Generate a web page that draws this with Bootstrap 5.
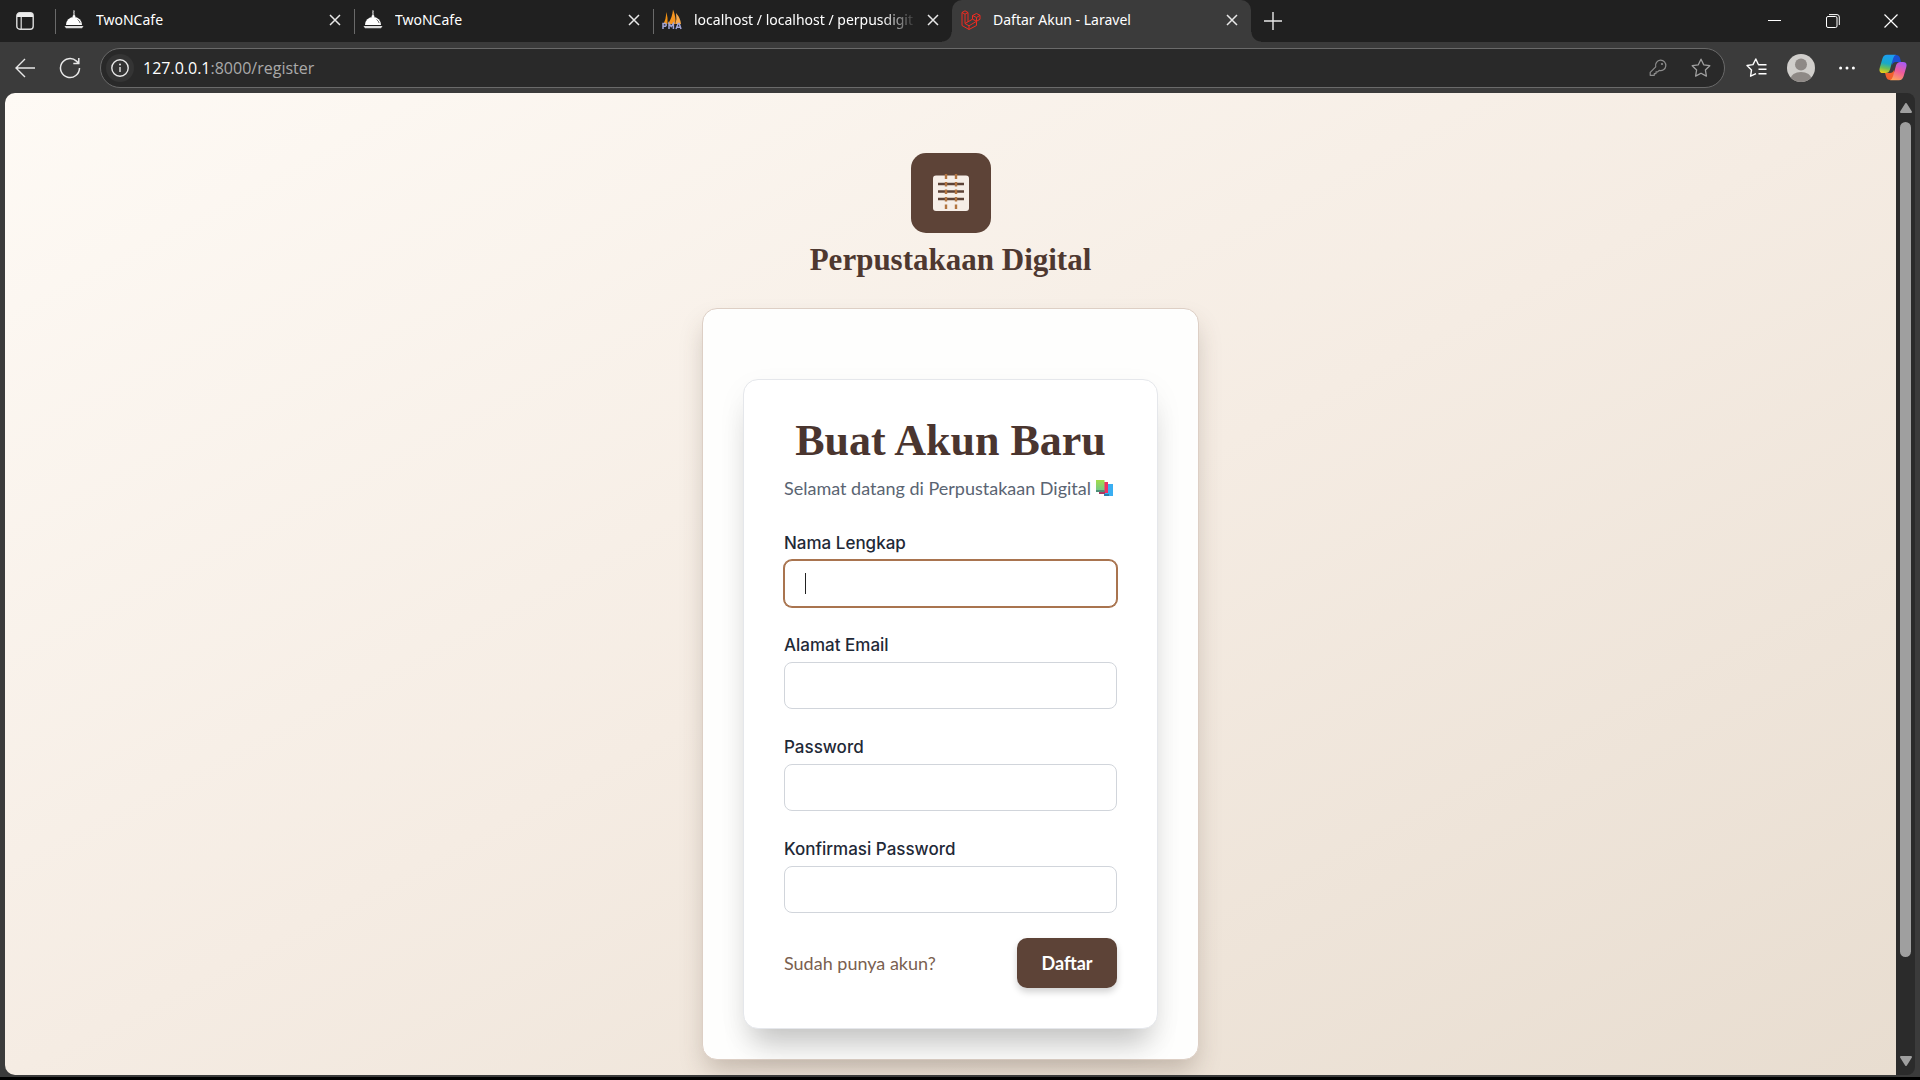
<!DOCTYPE html>
<html lang="id">
<head>
<meta charset="utf-8">
<meta name="viewport" content="width=device-width, initial-scale=1">
<title>Daftar Akun - Laravel</title>
<link href="https://cdn.jsdelivr.net/npm/bootstrap@5.3.0/dist/css/bootstrap.min.css" rel="stylesheet">
<style>
  body { height: 100vh; background: #3b3b3b; border-bottom: 3px solid #000; font-family: Lato, Inter, sans-serif; overflow: hidden; }
  svg { display: block; flex: none; }
  .chrome { font-family: "Noto Sans", "Open Sans", sans-serif; color: #fff; }
  .chrome button { background: none; border: 0; padding: 0; color: #e8e8e8; display: flex; align-items: center; justify-content: center; flex: none; }
  .strip { height: 42px; background: #202020; }
  .chrome .side-btn { width: 55px; height: 42px; padding-right: 5px; }
  .tab-item { flex: 0 1 299px; min-width: 0; height: 42px; padding: 0 13px 2px 9px; font-size: 14px; position: relative; }
  .tab-item.sep::before { content: ""; position: absolute; left: 0; top: 9px; width: 1px; height: 25px; background: #6a6a6a; }
  .tab-item a { flex: 1 1 0; min-width: 0; color: #fff; text-decoration: none; line-height: 20px; margin: 0 12px 0 12px; white-space: nowrap; overflow: hidden; }
  .tab-item a.cut { -webkit-mask-image: linear-gradient(90deg, #000 85%, transparent 101%); mask-image: linear-gradient(90deg, #000 85%, transparent 101%); }
  .tab-item.on { background: #3b3b3b; border-radius: 10px 10px 0 0; }
  .tab-item.on::before, .tab-item.on::after { content: ""; position: absolute; bottom: 0; width: 10px; height: 10px; }
  .tab-item.on::before { left: -10px; background: radial-gradient(circle at 0 0, #202020 9px, #3b3b3b 10px); }
  .tab-item.on::after { right: -10px; background: radial-gradient(circle at 100% 0, #202020 9px, #3b3b3b 10px); }
  .chrome .plus { width: 44px; height: 40px; }
  .chrome .win { width: 58px; height: 42px; }
  .tools { height: 51px; padding: 0 13px 0 15px; }
  .omni { height: 40px; margin: 0 21px 0 19px; border: 1px solid #6a6a6a; border-radius: 20px; background: #292929; padding: 0 13px 0 5px; }
  .chrome .info-dot { width: 28px; height: 28px; border-radius: 50%; background: #343434; }
  .url { font: 16px/24px "Open Sans", "Noto Sans", sans-serif; color: #a9a9a9; margin-left: 9px; white-space: nowrap; }
  .url span { color: #fff; }
  .viewport-box { min-height: 0; padding: 0 5px 2px; }
  .site { border-radius: 10px 0 0 10px; background: linear-gradient(to bottom right, #fefaf5 0%, #f5ece3 50%, #e8ddd0 100%); padding-top: 60px; overflow: hidden; }
  .scroller { width: 19px; background: #2b2b2b; border-radius: 0 8px 8px 0; padding: 10px 0 9px; }
  .thumb { width: 11px; background: #9f9f9f; border-radius: 6px; margin: 9px 0 99px; }
  .logo-box { width: 80px; height: 80px; border-radius: 15px; background: #5d4337; }
  .brand { font: 700 31px/40px "Liberation Serif", serif; color: #4e3830; margin: 7px 0 28px; }
  .outer { width: 497px; padding: 70px 40px 30px; border: 1px solid #ddcfc5; border-radius: 15px; background: #fefefd; box-shadow: 0 14px 26px -4px rgba(80,60,45,.28); }
  .inner { padding: 40px; border: 1px solid #e5e7eb; border-radius: 15px; background: #fff; box-shadow: 0 25px 30px -10px rgba(0,0,0,.2), 0 10px 30px rgba(0,0,0,.05); }
  .inner h1 { font: 700 44px/42px "Liberation Serif", serif; color: #4a352f; margin: 0 0 14px; white-space: nowrap; text-align: center; }
  .sub { font-size: 18px; line-height: 25px; color: #5a6472; white-space: nowrap; margin-bottom: 30px; }
  .field { margin-bottom: 26px; }
  .field:last-of-type { margin-bottom: 26px; }
  .field label { display: block; font: 500 17px/25px Inter, sans-serif; color: #1f2937; margin-bottom: 4px; }
  .field .form-control { height: 47px; padding: 8px 20px; border: 1px solid #d1d5db; border-radius: 8px; box-shadow: none; }
  .field .form-control:focus, .field .form-control.active { border-color: #a9744f; box-shadow: 0 0 0 1px #a9744f; caret-color: transparent; background: #fff linear-gradient(#222, #222) 20px 50% / 1px 21px no-repeat; }
  .field.last-field { margin-bottom: 25px; }
  .login { color: #7a5f50; font-size: 18px; text-decoration: none; }
  .submit { width: 100px; height: 50px; border: 0; border-radius: 10px; background: #5d4337; color: #fff; font-size: 18px; font-weight: 700; box-shadow: 0 4px 7px rgba(0,0,0,.18); }
</style>
<script src="https://cdn.jsdelivr.net/npm/bootstrap@5.3.0/dist/js/bootstrap.bundle.min.js"></script>
</head>
<body class="d-flex flex-column">

<svg width="0" height="0" class="position-absolute" aria-hidden="true">
  <symbol id="x" viewBox="0 0 12 12"><path d="M1 1l10 10M11 1L1 11" stroke="currentColor" stroke-width="1.5" fill="none"/></symbol>
  <symbol id="dish" viewBox="0 0 20 22">
    <path d="M9.5 1.5c1.8.6-.8 1.6.8 2.8M10 4v2" stroke="#ccc" stroke-width="1.3" fill="none"/>
    <circle cx="10" cy="7.500" r="1.4" fill="#fff"/>
    <path d="M2 16a8 8 0 0 1 16 0z" fill="#fff"/>
    <path d="M13.5 10.500q2.200 1.400 2.600 3.600" stroke="#555" stroke-width=".9" fill="none"/>
    <path d="M.5 17h19l-1.500 2.200H2z" fill="#ddd"/>
  </symbol>
  <symbol id="star" viewBox="0 0 20 20"><path d="M10 1.200l2.700 5.600 6.100.9-4.400 4.300 1 6.100-5.400-2.900-5.400 2.900 1-6.100L1.200 7.700l6.100-.9z" fill="none" stroke="currentColor" stroke-width="1.3" stroke-linejoin="round"/></symbol>
</svg>

<header class="chrome">
  <div class="strip d-flex align-items-center">
    <button class="side-btn" aria-label="Tab actions">
      <svg width="18" height="18" viewBox="0 0 18 18"><rect x=".8" y=".8" width="16.400" height="16.400" rx="3" fill="none" stroke="#ddd" stroke-width="1.4"/><path d="M1 5V3.500Q1 1 3.500 1h11Q17 1 17 3.500V5z" fill="#eee"/><path d="M5.200 5v12" stroke="#ddd" stroke-width="1.2"/></svg>
    </button>
    <div class="tab-item sep d-flex align-items-center">
      <svg width="20" height="22"><use href="#dish"/></svg><a href="#">TwoNCafe</a>
      <button aria-label="Close tab"><svg width="12" height="12"><use href="#x"/></svg></button>
    </div>
    <div class="tab-item sep d-flex align-items-center">
      <svg width="20" height="22"><use href="#dish"/></svg><a href="#">TwoNCafe</a>
      <button aria-label="Close tab"><svg width="12" height="12"><use href="#x"/></svg></button>
    </div>
    <div class="tab-item sep d-flex align-items-center">
      <svg width="20" height="22" viewBox="0 0 20 22"><path d="M1.500 15Q4 10 4.500 3q1.500 6 1 12z" fill="#f29111"/><path d="M6 15Q10.500 8 11 .5q3 7 2.500 14.500z" fill="#f7941d"/><path d="M13.500 15q1.500-5 .5-11 4.500 5 5 11z" fill="#f9a94b"/><path d="M1 20v-5.500h2.500q1.500 1.600 0 2.700H1M7 20v-5.500l2.200 3 2.200-3V20M14 20l2.200-5.500h1L19 20M15 18.200h3" fill="none" stroke="#a3a6d6" stroke-width="1.500"/></svg>
      <a class="cut" href="#">localhost / localhost / perpusdigit</a>
      <button aria-label="Close tab"><svg width="12" height="12"><use href="#x"/></svg></button>
    </div>
    <div class="tab-item on d-flex align-items-center">
      <svg width="20" height="22" viewBox="0 0 20 22"><path d="M1 3.500L4 1.800l3 1.700v9.300l4.500-2.600V6.500L15.500 4.500 19 6.300v4l-3.500 2v4.200L8 20.500 1 16.500zM1 3.500l3 1.700 3-1.700M4 5.200v9.300l4 2.300 7.500-4.500-4-2.100M11.500 6.500l4 2 3.500-2.200M15.500 8.500v3.800M8 16.800v3.700M4 14.500l3-1.700" fill="none" stroke="#ef2b20" stroke-width="1" stroke-linejoin="round"/></svg>
      <a href="#">Daftar Akun - Laravel</a>
      <button aria-label="Close tab"><svg width="12" height="12"><use href="#x"/></svg></button>
    </div>
    <button class="plus" aria-label="New tab"><svg width="18" height="18" viewBox="0 0 18 18"><path d="M9 0v18M0 9h18" stroke="currentColor" stroke-width="1.400"/></svg></button>
    <div class="d-flex ms-auto">
      <button class="win" aria-label="Minimize"><svg width="14" height="14" viewBox="0 0 14 14"><path d="M0 6.500h13" stroke="#fff"/></svg></button>
      <button class="win" aria-label="Restore"><svg width="14" height="14" viewBox="0 0 14 14"><rect x=".5" y="2.500" width="10.500" height="11" rx="1.500" fill="none" stroke="#fff"/><path d="M3 .6h8q2.300 0 2.300 2.400v8" fill="none" stroke="#fff"/></svg></button>
      <button class="win" aria-label="Close"><svg width="14" height="14" viewBox="0 0 14 14"><path d="M.5.500l13 13M13.500.5l-13 13" stroke="#fff" stroke-width="1.200"/></svg></button>
    </div>
  </div>

  <div class="tools d-flex align-items-center">
    <button aria-label="Back"><svg width="20" height="20" viewBox="0 0 20 20"><path d="M20 10H1M10 1L1 10l9 9" fill="none" stroke="currentColor" stroke-width="1.400"/></svg></button>
    <button class="ms-4" aria-label="Reload"><svg width="22" height="22" viewBox="0 0 22 22"><path d="M20.500 11a9.500 9.500 0 1 1-3-6.900l2 2M19.800 1v5.500h-5.500" fill="none" stroke="currentColor" stroke-width="1.500"/></svg></button>
    <div class="omni d-flex align-items-center flex-grow-1">
      <button class="info-dot" aria-label="Site information"><svg width="18" height="18" viewBox="0 0 18 18"><circle cx="9" cy="9" r="8.200" fill="none" stroke="currentColor" stroke-width="1.400"/><path d="M9 8v5" stroke="currentColor" stroke-width="1.400"/><circle cx="9" cy="5.500" r="1" fill="currentColor"/></svg></button>
      <div class="url flex-grow-1"><span>127.0.0.1</span>:8000/register</div>
      <button class="me-4" style="color:#8d8d8d" aria-label="Saved passwords"><svg width="18" height="18" viewBox="0 0 18 18"><path d="M11.500 1.200a5.200 5.200 0 1 1-1.300 10.200L8.700 12.900H7v1.700H5.300v1.700H1.200v-3L6.700 7.800A5.200 5.200 0 0 1 11.500 1.200z" fill="none" stroke="currentColor" stroke-width="1.200" stroke-linejoin="round"/><circle cx="13" cy="5" r="1.100" fill="currentColor"/></svg></button>
      <button style="color:#a0a0a0" aria-label="Add to favorites"><svg width="20" height="20"><use href="#star"/></svg></button>
    </div>
    <button aria-label="Favorites"><svg width="21" height="20" viewBox="0 0 21 20"><path d="M10 16L4.600 18.500l.9-6.300L1 7.800l6-.9L9.800 1.300 12.500 7h6.500M12.500 11.500H20.500M12.500 7H20.500M12.500 16H20.500" transform="translate(0 -.3)" fill="none" stroke="#fff" stroke-width="1.400" stroke-linejoin="round"/></svg></button>
    <button class="ms-3" aria-label="Profile"><svg class="ms-1" width="28" height="28" viewBox="0 0 28 28"><clipPath id="av"><circle cx="14" cy="14" r="14"/></clipPath><g clip-path="url(#av)"><rect width="28" height="28" fill="#d0cecb"/><circle cx="14" cy="10.500" r="6" fill="#8e8986"/><ellipse cx="14" cy="25" rx="10.500" ry="7" fill="#8e8986"/></g></svg></button>
    <button class="ms-4" aria-label="Settings and more"><svg width="16" height="4" viewBox="0 0 16 4"><g fill="#fff"><circle cx="1.600" cy="2" r="1.500"/><circle cx="8" cy="2" r="1.500"/><circle cx="14.400" cy="2" r="1.500"/></g></svg></button>
    <button class="ms-4" aria-label="Copilot"><svg width="28" height="27" viewBox="0 0 28 27">
      <defs>
        <linearGradient id="ca" x1=".4" y1="0" x2=".2" y2="1"><stop offset="0" stop-color="#1c9df0"/><stop offset=".45" stop-color="#18a9c8"/><stop offset=".72" stop-color="#6cbf56"/><stop offset="1" stop-color="#f7cf12"/></linearGradient>
        <linearGradient id="cb" x1=".7" y1="0" x2=".3" y2="1"><stop offset="0" stop-color="#a95bf2"/><stop offset=".5" stop-color="#ef5b9a"/><stop offset="1" stop-color="#ffa35c"/></linearGradient>
      </defs>
      <path d="M12 1h5q3 0 4 3l1 4h-5q-3 0-4 3z" fill="#1b4fd0"/>
      <path d="M6 19h5q3 0 4-3l1 10h-5q-3 0-4-3.500z" fill="#f2602d"/>
      <path d="M8 .8h9q-2 .7-3 4L11 15.500Q10 19 6.500 19H4Q-.5 19 .7 14L3.300 5Q4.500.8 8 .8z" fill="url(#ca)"/>
      <path d="M20 26.200h-9q2-.7 3-4L17 11.500Q18 8 21.500 8H24q4.500 0 3.300 5l-2.600 9q-1.200 4.200-4.700 4.200z" fill="url(#cb)"/>
    </svg></button>
  </div>
</header>

<main class="viewport-box flex-grow-1 d-flex">
  <div class="site flex-grow-1 d-flex flex-column align-items-center">
    <div class="logo-box d-flex align-items-center justify-content-center flex-shrink-0">
      <svg width="36" height="38" viewBox="0 0 36 38">
        <rect y="1.500" width="36" height="35.500" rx="3" fill="#f6eee7"/>
        <path d="M5 10h26M5 17.500h26M5 25h26" stroke="#5d4337" stroke-width="2.500"/>
        <path d="M13 0v5M13 8v4.500M13 15.500V20M13 23v4.500M13 30.500v4.500M23 0v5M23 8v4.500M23 15.500V20M23 23v4.500M23 30.500v4.500" stroke="#b27440" stroke-width="2.400"/>
      </svg>
    </div>
    <div class="brand">Perpustakaan Digital</div>
    <section class="outer">
      <div class="inner">
        <h1>Buat Akun Baru</h1>
        <p class="sub d-flex align-items-center">Selamat datang di Perpustakaan Digital
          <svg class="ms-1" width="18" height="17" viewBox="0 0 18 17"><defs><linearGradient id="gb" x1="0" y1="0" x2="0" y2="1"><stop offset="0" stop-color="#a4dc48"/><stop offset="1" stop-color="#70c98a"/></linearGradient></defs><path d="M9 4h9v12H9z" fill="#3aaef2"/><path d="M9 14h5v2H9z" fill="#2a7fae"/><path d="M4 2h9v11H4z" fill="#ef2f63"/><path d="M4 11.500h6V14H4z" fill="#a83a63"/><path d="M1 0h8.500v11H1z" fill="url(#gb)"/><path d="M1 10h8.500v2H1z" fill="#4f8f78"/></svg>
        </p>
        <form>
          <div class="field"><label for="name">Nama Lengkap</label><input class="form-control active" id="name" type="text" autofocus></div>
          <div class="field"><label for="email">Alamat Email</label><input class="form-control" id="email" type="email"></div>
          <div class="field"><label for="password">Password</label><input class="form-control" id="password" type="password"></div>
          <div class="field last-field"><label for="confirm">Konfirmasi Password</label><input class="form-control" id="confirm" type="password"></div>
          <div class="d-flex align-items-center justify-content-between">
            <a class="login" href="#">Sudah punya akun?</a>
            <button class="submit" type="button">Daftar</button>
          </div>
        </form>
      </div>
    </section>
  </div>
  <div class="scroller d-flex flex-column align-items-center">
    <svg width="12" height="10" viewBox="0 0 12 10"><path d="M6 1l5 8H1z" fill="#9f9f9f" stroke="#9f9f9f" stroke-width="2" stroke-linejoin="round"/></svg>
    <div class="thumb flex-grow-1"></div>
    <svg width="12" height="10" viewBox="0 0 12 10"><path d="M6 9l5-8H1z" fill="#9f9f9f" stroke="#9f9f9f" stroke-width="2" stroke-linejoin="round"/></svg>
  </div>
</main>
</body>
</html>
